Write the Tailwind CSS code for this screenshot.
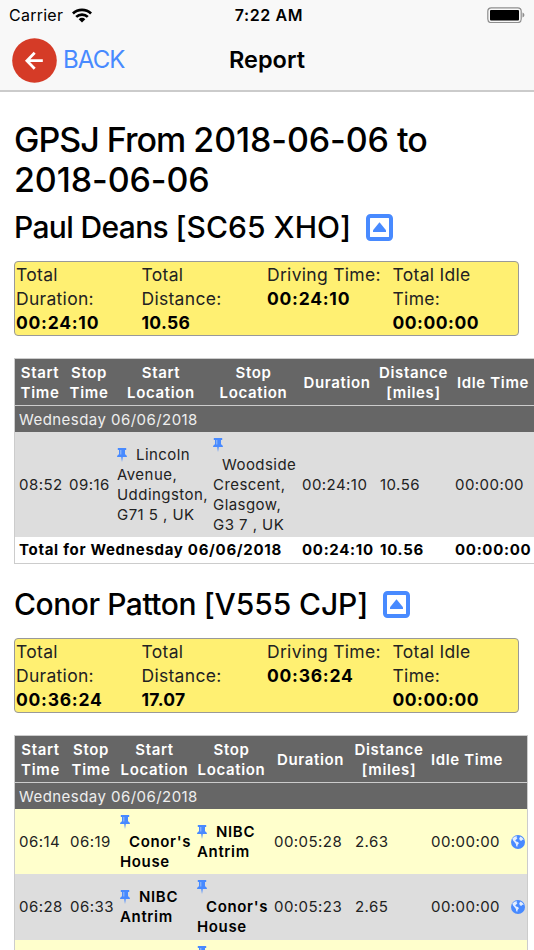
<!DOCTYPE html>
<html lang="en">
<head>
  <meta charset="UTF-8" />
  <title>Report</title>
  <meta name="viewport" content="width=device-width, initial-scale=1.0" />
  <script src="https://cdn.jsdelivr.net/npm/@tailwindcss/browser@4"></script>
</head>
<body class="bg-white text-black font-['Inter',sans-serif] h-[950px] overflow-hidden">

  <svg class="hidden">
    <symbol id="pin" viewBox="0 0 10 14">
      <path fill="#488aff" d="M.8 0h8.400v1.900H8v4.300c1.100.5 1.800 1.400 2 2.800H5.800L5 14l-.8-5H0c.2-1.400.9-2.300 2-2.800V1.900H.8z" />
      <path fill="#9fc0f5" d="M3.300 2h1v4.400h-1z" />
    </symbol>
    <symbol id="globe" viewBox="0 0 14 14">
      <circle cx="7" cy="7" r="7" fill="#488aff" />
      <path fill="#fff" fill-opacity=".85" d="M1.300 3.600 3.800 1.500l2.400-.3-.7 1.300 1 .5-1.200 1.500-1 .8.8 1.200 1.900.5.900 1.300-1.300 1.700-.4 2-1-.9-.3-2.200-1.300-1.600-1.500-1.800zM8.200 3.300l1.300-1.700 2.200 1.500 1 1.900-1.500-.3-.9 1.300-1.500-.8z" />
    </symbol>
    <symbol id="collapse" viewBox="0 0 27 27">
      <rect x="2" y="2" width="23" height="23" rx="2.500" fill="none" stroke="#488aff" stroke-width="4" />
      <path fill="#488aff" d="M13.500 8.200 20 16.300v1.700H7v-1.700z" />
    </symbol>
  </svg>

  <header class="bg-[#f8f8f8] h-[92px] border-b-2 border-[#cbcbcb]">
    <div class="grid grid-cols-3 items-center h-[30px] px-[9px]">
      <div class="flex items-center gap-[9px]">
        <span class="text-[16px] tracking-[0.250px]">Carrier</span>
        <svg class="w-5 h-[15px]" viewBox="0 0 20 15" fill="none" stroke="#000" stroke-width="2.700">
          <path d="M.9 5.500a13 13 0 0 1 18.200 0" />
          <path d="M4.200 8.900a8.300 8.300 0 0 1 11.600 0" />
          <path fill="#000" stroke="none" d="M10 14.500 6.700 11.200a4.700 4.700 0 0 1 6.600 0z" />
        </svg>
      </div>
      <span class="text-[16px] font-semibold text-center tracking-[0.600px] pl-1">7:22 AM</span>
      <svg class="w-[38px] h-4 justify-self-end" viewBox="0 0 38 16">
        <rect x=".8" y=".8" width="33.400" height="14.800" rx="3.500" fill="none" stroke="#8e8e8e" stroke-width="1.200" />
        <rect x="3" y="3" width="29" height="10.500" rx="1" fill="#000" />
        <path fill="#8e8e8e" d="M35.500 5.500c2.500.8 2.500 4.200 0 5z" />
      </svg>
    </div>
    <div class="grid grid-cols-3 items-center h-[60px] px-3">
      <div class="flex items-center gap-[6px]">
        <svg class="w-[45px] h-[45px]" viewBox="0 0 46 46">
          <circle cx="23" cy="23" r="22.800" fill="#d53b27" />
          <path d="M31.500 23.200H16M23.200 15l-8 8.200 8 8.200" fill="none" stroke="#fff" stroke-width="2.800" />
        </svg>
        <span class="text-[24px] text-[#488aff] tracking-[-0.900px]">BACK</span>
      </div>
      <h2 class="text-[23.500px] font-semibold text-center">Report</h2>
    </div>
  </header>

  <main class="pl-[14px] pt-7">
    <h1 class="text-[34px] leading-10 font-medium tracking-[-1px]">GPSJ From <span class="tracking-[-0.100px]">2018-06-06</span> to<br /><span class="tracking-[-0.100px]">2018-06-06</span></h1>

    <section>
      <div class="flex items-center gap-[15px] h-10 mt-[7px]">
        <h2 class="text-[30px] font-medium tracking-[-0.650px] whitespace-nowrap">Paul Deans <span class="tracking-[0.050px]">[SC65 XHO]</span></h2>
        <svg class="w-[27px] h-[27px]"><use href="#collapse" /></svg>
      </div>
      <div class="grid grid-cols-4 w-[505px] h-[75px] mt-[14px] pl-px pt-px border border-[#999] rounded bg-[#fff072] text-[17.500px] leading-6 tracking-[0.300px] text-[#222]">
        <div>Total<br />Duration:<br /><b class="text-black tracking-[0.750px]">00:24:10</b></div>
        <div>Total<br />Distance:<br /><b class="text-black">10.56</b></div>
        <div class="whitespace-nowrap">Driving Time:<br /><b class="text-black tracking-[0.750px]">00:24:10</b></div>
        <div>Total Idle<br />Time:<br /><b class="text-black tracking-[0.500px]">00:00:00</b></div>
      </div>

      <table class="table-fixed w-[522px] mt-[22px] border border-[#ccc] border-separate border-spacing-0 text-[15px] leading-5 tracking-[0.450px] text-[#222]">
        <colgroup>
          <col class="w-[50px]" />
          <col class="w-[48px]" />
          <col class="w-[96px]" />
          <col class="w-[89px]" />
          <col class="w-[78px]" />
          <col class="w-[75px]" />
          <col class="w-[84px]" />
        </colgroup>
        <thead class="bg-[#666] text-white font-semibold tracking-[0.650px]">
          <tr class="h-[47px] text-center whitespace-nowrap">
            <td class="border-b border-[#ccc] pt-[2px]">Start<br />Time</td>
            <td class="border-b border-[#ccc] pt-[2px]">Stop<br />Time</td>
            <td class="border-b border-[#ccc] pt-[2px]">Start<br />Location</td>
            <td class="border-b border-[#ccc] pt-[2px]">Stop<br />Location</td>
            <td class="border-b border-[#ccc] pt-[2px]">Duration</td>
            <td class="border-b border-[#ccc] pt-[2px]">Distance<br />[miles]</td>
            <td class="border-b border-[#ccc] pt-[2px]">Idle Time</td>
          </tr>
        </thead>
        <tbody class="whitespace-nowrap">
          <tr class="h-[26px] bg-[#666] text-[#eee]">
            <td colspan="7" class="pl-1 pt-[2px]">Wednesday 06/06/2018</td>
          </tr>
          <tr class="h-[105px] bg-[#ddd]">
            <td class="pl-1">08:52</td>
            <td class="pl-1">09:16</td>
            <td class="pl-1">
              <div class="flex items-center gap-[9px]"><svg class="w-[10px] h-[14px]"><use href="#pin" /></svg>Lincoln</div>
              Avenue,<br />Uddingston,<br />G71 5 , UK
            </td>
            <td class="pl-1">
              <div class="flex items-center h-5"><svg class="w-[10px] h-[14px]"><use href="#pin" /></svg></div>
              <div class="pl-[9px]">Woodside</div>
              Crescent,<br />Glasgow,<br />G3 7 , UK
            </td>
            <td class="pl-1">00:24:10</td>
            <td class="pl-1">10.56</td>
            <td class="pl-1">00:00:00</td>
          </tr>
          <tr class="h-[26px] font-bold text-black tracking-[0.700px]">
            <td colspan="4" class="pl-1">Total for Wednesday 06/06/2018</td>
            <td class="pl-1">00:24:10</td>
            <td class="pl-1">10.56</td>
            <td class="pl-1">00:00:00</td>
          </tr>
        </tbody>
      </table>
    </section>

    <section>
      <div class="flex items-center gap-[15px] h-10 mt-5">
        <h2 class="text-[30px] font-medium tracking-[-0.450px] whitespace-nowrap">Conor Patton <span class="tracking-[-0.100px]">[V555 CJP]</span></h2>
        <svg class="w-[27px] h-[27px]"><use href="#collapse" /></svg>
      </div>
      <div class="grid grid-cols-4 w-[505px] h-[75px] mt-[14px] pl-px pt-px border border-[#999] rounded bg-[#fff072] text-[17.500px] leading-6 tracking-[0.300px] text-[#222]">
        <div>Total<br />Duration:<br /><b class="text-black tracking-[0.750px]">00:36:24</b></div>
        <div>Total<br />Distance:<br /><b class="text-black">17.07</b></div>
        <div class="whitespace-nowrap">Driving Time:<br /><b class="text-black tracking-[0.750px]">00:36:24</b></div>
        <div>Total Idle<br />Time:<br /><b class="text-black tracking-[0.500px]">00:00:00</b></div>
      </div>

      <table class="table-fixed w-[514px] mt-[22px] border border-[#ccc] border-separate border-spacing-0 text-[15px] leading-5 tracking-[0.450px] text-[#222]">
        <colgroup>
          <col class="w-[51px]" />
          <col class="w-[50px]" />
          <col class="w-[77px]" />
          <col class="w-[77px]" />
          <col class="w-[81px]" />
          <col class="w-[76px]" />
          <col class="w-[80px]" />
          <col class="w-[20px]" />
        </colgroup>
        <thead class="bg-[#666] text-white font-semibold tracking-[0.650px]">
          <tr class="h-[47px] text-center whitespace-nowrap">
            <td class="border-b border-[#ccc] pt-[2px]">Start<br />Time</td>
            <td class="border-b border-[#ccc] pt-[2px]">Stop<br />Time</td>
            <td class="border-b border-[#ccc] pt-[2px]">Start<br />Location</td>
            <td class="border-b border-[#ccc] pt-[2px]">Stop<br />Location</td>
            <td class="border-b border-[#ccc] pt-[2px]">Duration</td>
            <td class="border-b border-[#ccc] pt-[2px]">Distance<br />[miles]</td>
            <td class="border-b border-[#ccc] pt-[2px]">Idle Time</td>
            <td class="border-b border-[#ccc] pt-[2px]"></td>
          </tr>
        </thead>
        <tbody class="whitespace-nowrap">
          <tr class="h-[26px] bg-[#666] text-[#eee]">
            <td colspan="8" class="pl-1 pt-[2px]">Wednesday 06/06/2018</td>
          </tr>
          <tr class="h-[65px] bg-[#ffffcc]">
            <td class="pl-1">06:14</td>
            <td class="pl-1">06:19</td>
            <td class="pl-1 font-semibold text-black tracking-[0.650px]">
              <div class="flex items-center h-5"><svg class="w-[10px] h-[14px]"><use href="#pin" /></svg></div>
              <div class="pl-[9px]">Conor's</div>
              House
            </td>
            <td class="pl-1 font-semibold text-black tracking-[0.650px]">
              <div class="flex items-center gap-[9px]"><svg class="w-[10px] h-[14px]"><use href="#pin" /></svg>NIBC</div>
              Antrim
            </td>
            <td class="pl-1">00:05:28</td>
            <td class="pl-1">2.63</td>
            <td class="pl-1">00:00:00</td>
            <td class="pl-1"><svg class="w-[14px] h-[14px]"><use href="#globe" /></svg></td>
          </tr>
          <tr class="h-[66px] bg-[#ddd]">
            <td class="pl-1">06:28</td>
            <td class="pl-1">06:33</td>
            <td class="pl-1 font-semibold text-black tracking-[0.650px]">
              <div class="flex items-center gap-[9px]"><svg class="w-[10px] h-[14px]"><use href="#pin" /></svg>NIBC</div>
              Antrim
            </td>
            <td class="pl-1 font-semibold text-black tracking-[0.650px]">
              <div class="flex items-center h-5"><svg class="w-[10px] h-[14px]"><use href="#pin" /></svg></div>
              <div class="pl-[9px]">Conor's</div>
              House
            </td>
            <td class="pl-1">00:05:23</td>
            <td class="pl-1">2.65</td>
            <td class="pl-1">00:00:00</td>
            <td class="pl-1"><svg class="w-[14px] h-[14px]"><use href="#globe" /></svg></td>
          </tr>
          <tr class="h-[65px] bg-[#ffffcc] align-top">
            <td></td>
            <td></td>
            <td></td>
            <td class="pl-1 pt-[6px]"><svg class="w-[10px] h-[14px]"><use href="#pin" /></svg></td>
            <td></td>
            <td></td>
            <td></td>
            <td></td>
          </tr>
        </tbody>
      </table>
    </section>
  </main>

</body>
</html>
